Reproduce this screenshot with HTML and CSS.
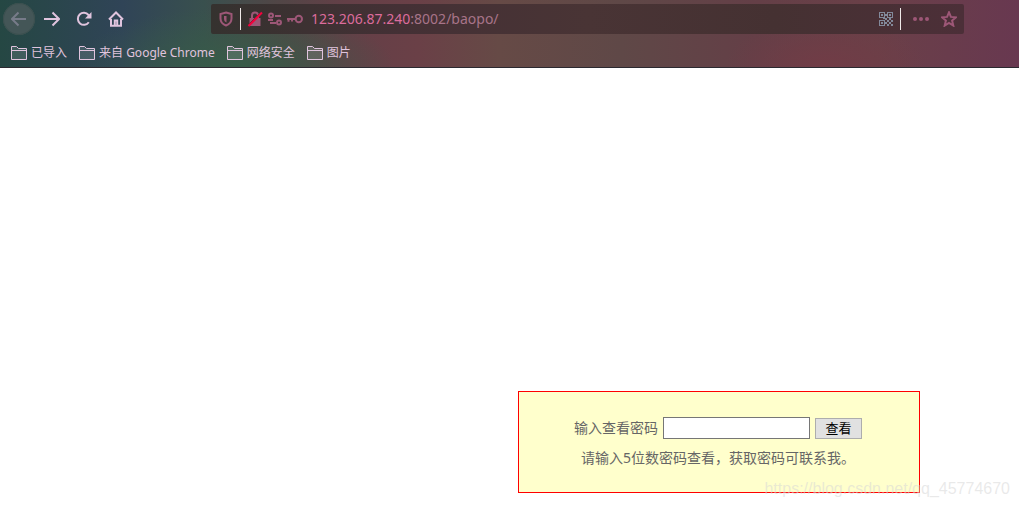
FILE: index.html
```html
<!DOCTYPE html>
<html lang="zh-CN">
<head>
<meta charset="utf-8">
<title>baopo</title>
<link rel="stylesheet" href="styles.css">
</head>
<body>
<header class="browser">
  <div class="toolbar">
    <nav class="nav-buttons" aria-label="导航">
      <button class="nav-button nav-back" type="button" aria-label="后退" disabled>
        <svg class="icon" viewBox="0 0 16 16"><path d="M15 8H1.5M7.5 1.5 1 8l6.500 6.500"/></svg>
      </button>
      <button class="nav-button" type="button" aria-label="前进">
        <svg class="icon" viewBox="0 0 16 16"><path d="M0 8h14.500M8.500 1.500 15 8l-6.500 6.500"/></svg>
      </button>
      <button class="nav-button" type="button" aria-label="刷新">
        <svg class="icon" viewBox="0 0 16 16"><path d="M12.800 11.200A6 6 0 1 1 12.500 4L14 6"/><path class="solid" d="M15.500 1v6.500H9z"/></svg>
      </button>
      <button class="nav-button" type="button" aria-label="主页">
        <svg class="icon" viewBox="0 0 16 16"><path d="M1 8.500 8 1.500l7 7M3 8v6.700h10V8"/><path d="M6.800 14V9.500h2.400V14"/></svg>
      </button>
    </nav>
    <div class="address-bar">
      <svg class="icon shield" viewBox="0 0 16 16"><path d="M8 1.500 13.500 3v4.500c0 3.500-2 5.700-5.500 7-3.500-1.300-5.500-3.500-5.500-7V3z"/><path class="solid" d="M8.500 5v6.500C6.500 10.500 6 9.500 6 7.500V5z"/></svg>
      <span class="divider"></span>
      <span class="identity">
        <svg class="icon" viewBox="0 0 16 16"><path d="M5 7V4.500a3 3 0 0 1 6 0V7"/><path class="solid" d="M2.500 7h11v8h-11z"/><path class="bar-gap" d="M.5 14.500 14 1"/><path class="strike" d="M1.500 15 15 1.500"/></svg>
        <svg class="icon" viewBox="0 0 16 16"><circle cx="4" cy="4.500" r="2"/><path d="M8 5h6M1 9h5M3 12h6"/><circle cx="12" cy="11.500" r="2"/></svg>
        <svg class="icon" viewBox="0 0 16 16"><circle cx="11.800" cy="8" r="3.200"/><path d="M8.500 8H0M1.500 8v2.800M5 8v2.500"/></svg>
      </span>
      <div class="url" role="textbox" aria-label="地址" contenteditable="true" spellcheck="false"><span class="url-host">123.206.87.240</span>:8002/baopo/</div>
      <button class="bar-button qr" type="button" aria-label="二维码">
        <svg class="icon" viewBox="0 0 14 14" shape-rendering="crispEdges"><path d="M.5.500h5v5h-5zM8.500.500h5v5h-5zM.5 8.500h5v5h-5z"/><path class="solid" d="M2 2h2v2H2zM10 2h2v2h-2zM2 10h2v2H2zM6 2h2v2H6zM4 6h2v1H4zM6 6h2v2H6zM10 6h2v2h-2zM8 8h2v2H8zM12 8h2v2h-2zM6 10h2v2H6zM10 10h2v2h-2zM8 12h2v2H8zM12 12h2v2h-2z"/></svg>
      </button>
      <span class="divider"></span>
      <button class="bar-button more" type="button" aria-label="更多">
        <svg class="icon" viewBox="0 0 16 16"><g class="solid"><circle cx="2" cy="8" r="2"/><circle cx="8" cy="8" r="2"/><circle cx="14" cy="8" r="2"/></g></svg>
      </button>
      <button class="bar-button" type="button" aria-label="收藏">
        <svg class="icon" viewBox="0 0 16 16"><path d="m8 1.300 1.900 4.600 5 .4-3.800 3.300 1.200 5L8 12l-4.300 2.600 1.200-5L1.100 6.300l5-.4z"/></svg>
      </button>
    </div>
  </div>
  <nav class="bookmarks" aria-label="书签">
    <button class="bookmark" type="button"><svg class="folder" viewBox="0 0 16 14"><path d="M.5 13.500V.5h5l2 2h8v11zM.5 4.500h15"/></svg>已导入</button>
    <button class="bookmark" type="button"><svg class="folder" viewBox="0 0 16 14"><path d="M.5 13.500V.5h5l2 2h8v11zM.5 4.500h15"/></svg>来自 Google Chrome</button>
    <button class="bookmark" type="button"><svg class="folder" viewBox="0 0 16 14"><path d="M.5 13.500V.5h5l2 2h8v11zM.5 4.500h15"/></svg>网络安全</button>
    <button class="bookmark" type="button"><svg class="folder" viewBox="0 0 16 14"><path d="M.5 13.500V.5h5l2 2h8v11zM.5 4.500h15"/></svg>图片</button>
  </nav>
</header>
<main class="page">
  <form class="password-box">
    <div class="password-row">
      <label for="password">输入查看密码</label>
      <input class="password-input" id="password" type="password">
      <button class="view-button" type="button">查看</button>
    </div>
    <p class="hint">请输入5位数密码查看，获取密码可联系我。</p>
  </form>
  <div class="watermark">https://blog.csdn.net/qq_45774670</div>
</main>
</body>
</html>
```
FILE: styles.css
```css
* {
  box-sizing: border-box;
}

body {
  margin: 0;
  min-height: 100vh;
  display: flex;
  flex-direction: column;
  background: #fff;
  font-family: "Noto Sans", "Noto Sans CJK SC", sans-serif;
}

button {
  margin: 0;
  padding: 0;
  border: 0;
  background: none;
  color: inherit;
  font: inherit;
}

.browser {
  border-bottom: 1px solid #2b2930;
  color: #e0c4de;
  background:
    radial-gradient(ellipse 160px 60px at 23% 100%, #375c48 0%, transparent 100%),
    radial-gradient(ellipse 100px 50px at 81% 100%, #713c46 0%, transparent 100%),
    linear-gradient(90deg, #254743 0%, #304457 12%, #39504e 20%, #504646 27%, #643f47 34%, #6a4047 41%, #664a46 49%, #5f4847 61%, #643f47 74%, #6a4048 86%, #683850 100%);
}

.toolbar {
  display: flex;
  align-items: center;
  height: 38px;
  padding: 0 55px 0 3px;
}

.nav-buttons {
  display: flex;
  width: 208px;
}

.nav-button {
  display: grid;
  place-items: center;
  width: 32px;
  height: 32px;
  border-radius: 50%;
}

.nav-back {
  margin-right: 1px;
  background: #445657;
  box-shadow: inset 0 0 0 1px #3b504f;
  color: #777b89;
}

.icon {
  display: block;
  flex: none;
  width: 16px;
  height: 16px;
  fill: none;
  stroke: currentColor;
  stroke-width: 2;
}

.icon .solid {
  fill: currentColor;
  stroke: none;
}

.icon .strike {
  stroke: #f5003c;
}

.icon .bar-gap {
  stroke: #3c3034;
  stroke-width: 1;
}

.address-bar {
  display: flex;
  flex: 1;
  align-items: center;
  height: 30px;
  padding: 0 7px;
  border-radius: 2px;
  background: linear-gradient(90deg, #35322f, #443035 25%, #493435 50%, #453132 75%, #4c2f38);
  color: #9d5777;
}

.divider {
  width: 1px;
  height: 22px;
  background: #f0eae9;
}

.shield {
  margin-right: 6px;
}

.identity {
  display: flex;
  gap: 4px;
  margin: 0 8px 0 6px;
}

.url {
  flex: 1;
  outline: 0;
  color: #a87489;
  font-size: 14px;
  line-height: 20px;
  white-space: nowrap;
}

.url-host {
  color: #dc6c9c;
}

.qr {
  margin-right: 7px;
  color: #82899a;
}

.qr .icon {
  width: 14px;
  height: 14px;
  stroke-width: 1;
}

.more {
  margin: 0 12px;
}

.bookmarks {
  display: flex;
  gap: 12px;
  height: 29px;
  padding: 1px 11px 0;
}

.bookmark {
  display: flex;
  align-items: center;
  gap: 4px;
  font-size: 12px;
  line-height: 16px;
}

.folder {
  width: 16px;
  height: 14px;
  fill: rgb(255 255 255 / 12%);
  stroke: currentColor;
}

.page {
  position: relative;
  display: flex;
  flex: 1;
  align-items: flex-end;
  justify-content: flex-end;
  padding: 0 99px 14px 16px;
}

.password-box {
  width: 402px;
  padding: 25px 17px 23px 15px;
  border: 1px solid #f00;
  background: #ffc;
  color: #666;
  font-size: 14px;
  line-height: 22px;
  text-align: center;
}

.password-row {
  display: flex;
  align-items: center;
  justify-content: center;
  gap: 5px;
}

.password-input {
  width: 147px;
  height: 22px;
  border: 1px solid #767676;
  background: #fff;
}

.view-button {
  width: 47px;
  height: 21px;
  border: 1px solid #adadad;
  background: #e1e1e1;
  color: #000;
  font-size: 13px;
  line-height: 18px;
}

.hint {
  margin: 8px 0 0;
}

.watermark {
  position: absolute;
  right: 9px;
  bottom: 8px;
  color: rgb(215 215 215 / 55%);
  font: 16px/20px "Liberation Sans", sans-serif;
  pointer-events: none;
}
```
